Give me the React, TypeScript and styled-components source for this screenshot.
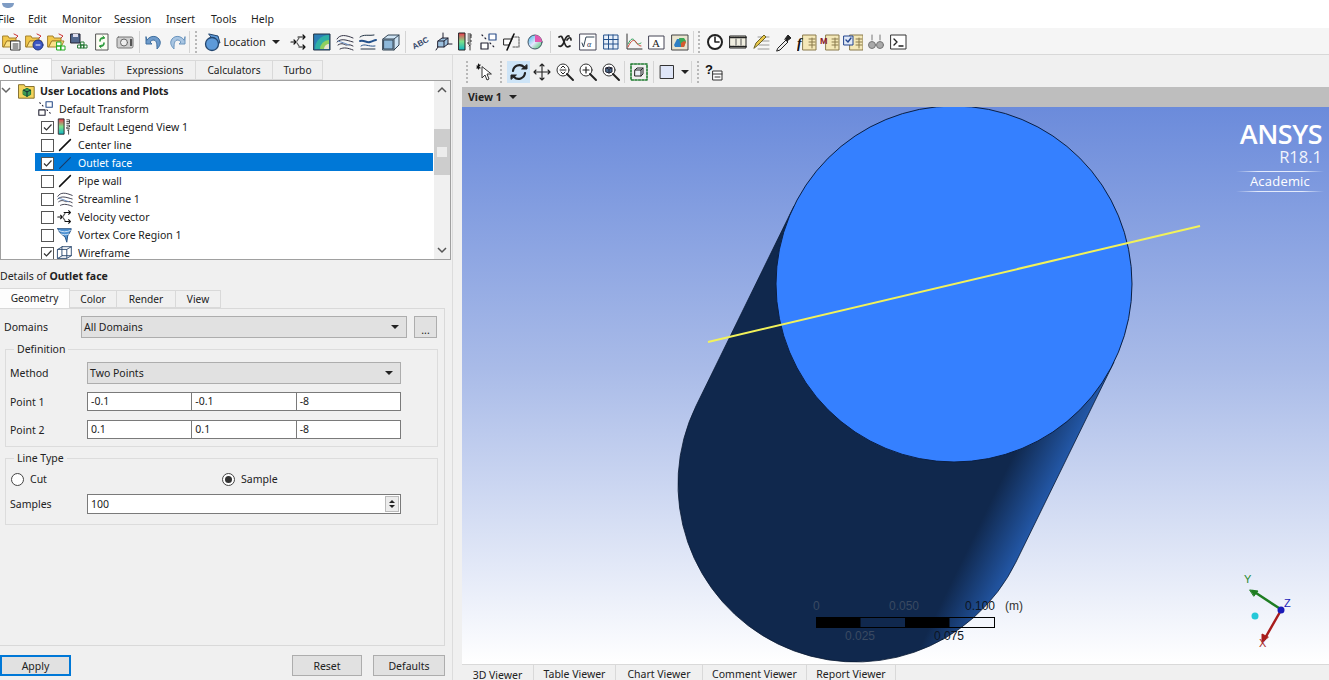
import React from 'react';
import styled, { createGlobalStyle } from 'styled-components';

const GlobalStyle = createGlobalStyle`
  html, body {
    margin: 0;
    padding: 0;
    height: 100%;
    overflow: hidden;
    background: #f0f0f0;
  }
  #root {
    height: 100%;
  }
  * {
    box-sizing: border-box;
  }
`;

const Shell = styled.div`
  width: 1329px;
  height: 680px;
  display: flex;
  flex-direction: column;
  overflow: hidden;
  font-family: 'Noto Sans', 'Open Sans', sans-serif;
  font-size: 10.5px;
  color: #222;
  background: #f0f0f0;
`;

const TitleBar = styled.div`
  height: 8px;
  background: #fff;
  flex: none;
  overflow: hidden;
  display: flex;
  align-items: flex-end;
  padding-left: 2px;
`;

const TitleDot = styled.span`
  width: 12px;
  height: 5px;
  border-radius: 0 0 6px 6px;
  background: #7f9cc4;
`;

const MenuBar = styled.nav`
  height: 20px;
  flex: none;
  background: #fff;
  display: flex;
  align-items: center;
  padding-top: 2px;
`;

const MenuItem = styled.span<{ $w: number }>`
  width: ${(p) => p.$w}px;
  flex: none;
  &:first-child {
    margin-left: -2px;
    width: ${(p) => p.$w + 2}px;
  }
`;

const MainToolbar = styled.div`
  height: 27px;
  flex: none;
  display: flex;
  align-items: center;
  background: #f5f5f5;
  border-bottom: 1px solid #d8d8d8;
  padding: 2px 0 0 1px;
`;

const ToolButton = styled.span<{ $active?: boolean; $w?: number }>`
  width: ${(p) => p.$w ?? 23}px;
  height: 22px;
  flex: none;
  display: flex;
  align-items: center;
  justify-content: center;
  background: ${(p) => (p.$active ? '#cde4f7' : 'transparent')};
`;

const Separator = styled.span<{ $w?: number }>`
  width: ${(p) => p.$w ?? 6}px;
  height: 22px;
  flex: none;
  display: flex;
  justify-content: center;
  &::before {
    content: '';
    width: 1px;
    background: #d4d4d4;
  }
`;

const Handle = styled.span<{ $w: number }>`
  width: ${(p) => p.$w}px;
  height: 22px;
  flex: none;
  display: flex;
  justify-content: center;
  &::before {
    content: '';
    width: 2px;
    background: repeating-linear-gradient(#b8b8b8 0 2px, transparent 2px 4px);
  }
`;

const LocationButton = styled.span`
  width: 87.5px;
  height: 22px;
  flex: none;
  display: flex;
  align-items: center;
  gap: 1px;
  padding-left: 2.5px;
`;

const CaretDown = styled.span<{ $ml?: number }>`
  width: 0;
  height: 0;
  flex: none;
  margin-left: ${(p) => p.$ml ?? 4}px;
  border-left: 4px solid transparent;
  border-right: 4px solid transparent;
  border-top: 4px solid #222;
`;

const Workspace = styled.div`
  flex: 1;
  min-height: 0;
  display: flex;
`;

const LeftPanel = styled.section`
  width: 453px;
  flex: none;
  display: flex;
  flex-direction: column;
  border-right: 1px solid #dcdcdc;
  padding-top: 3px;
`;

const TabStrip = styled.div<{ $h: number }>`
  height: ${(p) => p.$h}px;
  flex: none;
  display: flex;
  align-items: flex-end;
`;

const Tab = styled.span<{ $w: number; $active?: boolean; $start?: boolean }>`
  width: ${(p) => p.$w}px;
  height: ${(p) => (p.$active ? '100%' : 'calc(100% - 2px)')};
  flex: none;
  display: flex;
  align-items: center;
  justify-content: ${(p) => (p.$start ? 'flex-start' : 'center')};
  padding-left: ${(p) => (p.$start ? 3 : 0)}px;
  padding-bottom: ${(p) => (p.$active ? 2 : 0)}px;
  font-size: 10.2px;
  background: ${(p) => (p.$active ? '#fdfdfd' : '#f0f0f0')};
  border: 1px solid #d9d9d9;
  border-left-width: 0;
  border-bottom-width: ${(p) => (p.$active ? 0 : 1)}px;
`;

const TreeBox = styled.div`
  width: 451px;
  height: 180px;
  flex: none;
  display: flex;
  background: #fff;
  border: 1px solid #a0a0a0;
  overflow: hidden;
`;

const TreeRows = styled.div`
  flex: 1;
  min-width: 0;
`;

const TreeRow = styled.div<{ $selected?: boolean; $indent: number }>`
  height: 18px;
  display: flex;
  align-items: center;
  margin: 0 1px 0 34px;
  padding: 2px 0 0 ${(p) => p.$indent}px;
  background: ${(p) => (p.$selected ? '#0078d7' : 'transparent')};
  color: ${(p) => (p.$selected ? '#fff' : '#222')};
`;

const RootRow = styled.div`
  height: 18px;
  display: flex;
  align-items: center;
  font-weight: 700;
  padding-top: 1px;
`;

const Chevron = styled.svg`
  flex: none;
  margin-right: 5px;
`;

const RowIcon = styled.span`
  width: 18px;
  height: 18px;
  flex: none;
  margin: 0 4px 0 2px;
  display: flex;
  align-items: center;
  justify-content: center;
`;

const CheckBox = styled.span`
  width: 13px;
  height: 13px;
  flex: none;
  background: #fff;
  border: 1px solid #555;
  display: flex;
  align-items: center;
  justify-content: center;
`;

const ScrollBar = styled.div`
  width: 16px;
  flex: none;
  display: flex;
  flex-direction: column;
  background: #f0f0f0;
`;

const ScrollArrow = styled.div`
  height: 17px;
  flex: none;
  display: flex;
  align-items: center;
  justify-content: center;
`;

const ArrowGlyph = styled.svg<{ $flip?: boolean }>`
  transform: ${(p) => (p.$flip ? 'scaleY(-1)' : 'none')};
`;

const ScrollTrack = styled.div`
  flex: 1;
  padding-top: 31px;
`;

const ScrollThumb = styled.div`
  height: 46px;
  background: #cdcdcd;
  display: flex;
  align-items: center;
  justify-content: center;
  &::before {
    content: '';
    width: 10px;
    height: 10px;
    background: #ececec;
  }
`;

const DetailsTitle = styled.div`
  height: 28px;
  flex: none;
  display: flex;
  align-items: flex-end;
  padding-bottom: 5px;
  gap: 3px;
  b {
    font-weight: 700;
  }
`;

const DetailsPane = styled.div`
  width: 445px;
  height: 338px;
  flex: none;
  background: #f0f0f0;
  border: 1px solid #d9d9d9;
  border-left-width: 0;
  padding: 7px 7px 0 4px;
  display: flex;
  flex-direction: column;
`;

const DomainRow = styled.div`
  height: 22px;
  flex: none;
  display: flex;
  align-items: center;
`;

const FieldLabel = styled.label<{ $w: number }>`
  width: ${(p) => p.$w}px;
  flex: none;
`;

const Combo = styled.div<{ $w: number }>`
  width: ${(p) => p.$w}px;
  height: 22px;
  flex: none;
  background: #e1e1e1;
  border: 1px solid #adadad;
  display: flex;
  align-items: center;
  justify-content: space-between;
  padding: 0 7px 1px 2px;
  &::after {
    content: '';
    border-left: 4px solid transparent;
    border-right: 4px solid transparent;
    border-top: 4px solid #222;
    margin-top: 1px;
  }
`;

const MoreButton = styled.div`
  width: 23px;
  height: 22px;
  margin-left: 7px;
  background: #e1e1e1;
  border: 1px solid #adadad;
  display: flex;
  align-items: flex-end;
  justify-content: center;
  line-height: 14px;
`;

const Group = styled.fieldset<{ $h: number; $mt: number }>`
  width: 433px;
  height: ${(p) => p.$h}px;
  flex: none;
  margin: ${(p) => p.$mt}px 0 0 1px;
  padding: 0 4px;
  border: 1px solid #dcdcdc;
  min-width: 0;
  legend {
    padding: 0 3px;
    margin-left: 4px;
    line-height: 13px;
  }
`;

const FormRow = styled.div<{ $h: number; $mt?: number }>`
  height: ${(p) => p.$h}px;
  margin-top: ${(p) => p.$mt ?? 0}px;
  display: flex;
  align-items: center;
`;

const InputGroup = styled.div`
  width: 314px;
  display: flex;
`;

const TextInput = styled.div`
  flex: 1;
  height: 19px;
  background: #fff;
  border: 1px solid #7a7a7a;
  margin-left: -1px;
  padding-left: 3px;
  line-height: 16px;
  &:first-child {
    margin-left: 0;
  }
`;

const SpinInput = styled.div`
  width: 314px;
  height: 20px;
  background: #fff;
  border: 1px solid #7a7a7a;
  display: flex;
  align-items: center;
  justify-content: space-between;
  padding: 0 1px 0 3px;
`;

const SpinArrows = styled.span`
  width: 14px;
  height: 16px;
  background: #ececec;
  border: 1px solid #bbb;
  display: flex;
  flex-direction: column;
  align-items: center;
  justify-content: space-evenly;
`;

const SpinArrow = styled.i<{ $up?: boolean }>`
  border-left: 3px solid transparent;
  border-right: 3px solid transparent;
  ${(p) => (p.$up ? 'border-bottom: 3px solid #222;' : 'border-top: 3px solid #222;')}
`;

const RadioWrap = styled.span<{ $w: number }>`
  width: ${(p) => p.$w}px;
  flex: none;
  display: flex;
  align-items: center;
  gap: 6px;
  &:first-child {
    padding-left: 1px;
  }
`;

const Radio = styled.span<{ $on?: boolean }>`
  width: 13px;
  height: 13px;
  border: 1px solid #444;
  border-radius: 50%;
  background: #fff;
  display: flex;
  align-items: center;
  justify-content: center;
  &::before {
    content: '';
    width: 7px;
    height: 7px;
    border-radius: 50%;
    background: ${(p) => (p.$on ? '#333' : 'transparent')};
  }
`;

const ButtonBar = styled.div`
  width: 445px;
  flex: none;
  margin-top: 9px;
  display: flex;
  gap: 11px;
`;

const PushButton = styled.button<{ $w: number; $default?: boolean }>`
  width: ${(p) => p.$w}px;
  height: 21px;
  padding: 0;
  font: inherit;
  color: inherit;
  background: #e1e1e1;
  border: ${(p) => (p.$default ? '2px solid #0078d7' : '1px solid #adadad')};
  margin-right: ${(p) => (p.$default ? 210 : 0)}px;
`;

const RightPanel = styled.section`
  flex: 1;
  min-width: 0;
  margin-left: 9px;
  display: flex;
  flex-direction: column;
`;

const ViewToolbar = styled.div`
  height: 32px;
  flex: none;
  display: flex;
  align-items: center;
  padding-top: 2px;
`;

const ViewHeader = styled.div`
  height: 20px;
  flex: none;
  background: #bebebe;
  display: flex;
  align-items: center;
  padding-left: 6px;
  font-weight: 700;
  gap: 3px;
`;

const Canvas = styled.div`
  flex: 1;
  min-height: 0;
  position: relative;
  background: linear-gradient(#6b8bdb, #a9bbe8 47%, #ffffff 100%);
  overflow: hidden;
`;

const Scene = styled.svg`
  position: absolute;
  left: 0;
  top: 0;
`;

const Logo = styled.div`
  position: absolute;
  right: 7px;
  top: 13px;
  width: 90px;
  color: #fff;
  font-family: 'Open Sans', 'Noto Sans', sans-serif;
  text-align: right;
`;

const LogoName = styled.div`
  font-size: 27px;
  font-weight: 600;
  line-height: 27px;
  letter-spacing: -0.5px;
`;

const LogoRelease = styled.div`
  font-size: 16.5px;
  line-height: 20px;
  opacity: 0.9;
`;

const LogoEdition = styled.div`
  margin: 4px -2px 0 4px;
  height: 21px;
  font-size: 13px;
  line-height: 20px;
  text-align: center;
  letter-spacing: 0.2px;
  background:
    linear-gradient(90deg, transparent, #e4ebfb 25%, #e4ebfb 75%, transparent) top / 100% 1px no-repeat,
    linear-gradient(90deg, transparent, #e4ebfb 25%, #e4ebfb 75%, transparent) bottom / 100% 1px no-repeat;
`;

const BottomTabs = styled.div`
  height: 16px;
  flex: none;
  display: flex;
  background: #f0f0f0;
  border-top: 1px solid #d9d9d9;
`;

const BottomTab = styled.span<{ $w: number; $active?: boolean }>`
  width: ${(p) => p.$w}px;
  flex: none;
  display: flex;
  align-items: center;
  justify-content: center;
  padding-top: ${(p) => (p.$active ? 4 : 3)}px;
  line-height: 12px;
  border-right: 1px solid #d9d9d9;
  white-space: nowrap;
`;

const Svg = ({ size = 20, children }: { size?: number; children: React.ReactNode }) => (
  <svg width={size} height={size} viewBox="0 0 20 20" fill="none" strokeLinecap="round" strokeLinejoin="round">
    {children}
  </svg>
);

const folder = (
  <>
    <path d="M1 4h5l1 2h7v3H5L2 15H1z" fill="#f2c84b" stroke="#a5812a" />
    <path d="M5 9h12l-3 6H2z" fill="#fae28a" stroke="#a5812a" />
  </>
);

const glass = (inner: React.ReactNode) => (
  <>
    <circle cx="8" cy="8" r="6" fill="#fff" stroke="#333" />
    {inner}
    <path d="M12 12l6 6" stroke="#222" strokeWidth="2" />
  </>
);

const sheet = (x: number) => (
  <>
    <rect x={x} y="3" width="13" height="15" fill="#f4e8b8" stroke="#8a7b4c" />
    <path d={`M${x + 6} 7h6M${x + 6} 10h6M${x + 6} 13h6M${x + 9} 6v10`} stroke="#8a7b4c" />
  </>
);

const icons: Record<string, React.ReactNode> = {
  loadCase: (
    <>
      {folder}
      <rect x="9" y="9" width="9" height="9" fill="#fff" stroke="#333" />
      <path d="M11 12h5M11 14h5M11 16h5" stroke="#333" />
      <path d="M12 2l4 2-2 2" stroke="#c33" />
    </>
  ),
  loadDb: (
    <>
      {folder}
      <circle cx="13" cy="13" r="5" fill="#3d57c4" stroke="#20357f" />
      <path d="M11 13h4" stroke="#fff" />
      <path d="M12 2l4 2-2 2" stroke="#c33" />
    </>
  ),
  loadGrid: (
    <>
      {folder}
      <path d="M10 10h4v4h-4zM14 14h4v4h-4zM10 14h4v4h-4z" fill="#fff" stroke="#2a2" />
      <path d="M12 2l4 2-2 2" stroke="#c33" />
    </>
  ),
  saveGrid: (
    <>
      <rect x="1" y="2" width="9" height="9" fill="#52688f" stroke="#223" />
      <rect x="3" y="2" width="5" height="3" fill="#dde" />
      <path d="M11 10h3v3h-3zM14 13h3v3h-3zM11 13h3v3h-3zM8 13h3v3H8z" fill="#fff" stroke="#273" />
    </>
  ),
  refresh: (
    <>
      <rect x="4" y="2" width="12" height="16" fill="#fdfdf4" stroke="#555" />
      <path d="M12 6a3 3 0 0 0-4 3M8 14a3 3 0 0 0 4-3" stroke="#2a9a3a" strokeWidth="1.6" />
      <path d="M11 4l1.500 2L10 7M9 16l-1.500-2L10 13" stroke="#2a9a3a" />
    </>
  ),
  camera: (
    <>
      <rect x="2" y="5" width="16" height="11" rx="1.5" fill="#cfcfcf" stroke="#777" />
      <circle cx="9" cy="10.5" r="3.5" fill="#eee" stroke="#666" />
      <rect x="15" y="7" width="2" height="7" fill="#555" />
    </>
  ),
  undo: <path d="M3 8c3-5 11-5 13 1 1 3-1 6-3 8 0-4 0-8-3-9-2 0-3 1-4 2l2 2H2V5z" fill="#6e9bcb" stroke="#3f6f9f" />,
  redo: <path d="M17 8c-3-5-11-5-13 1-1 3 1 6 3 8 0-4 0-8 3-9 2 0 3 1 4 2l-2 2h6V5z" fill="#a8c5e2" stroke="#6a94bd" />,
  location: (
    <>
      <path d="M6 2l9 2 2 7-5-1z" fill="#5d9ad9" stroke="#23466f" />
      <circle cx="9" cy="12" r="6.5" fill="#5d9ad9" stroke="#23466f" strokeWidth="1.3" />
    </>
  ),
  arrows: (
    <g stroke="#111" strokeWidth="1.2">
      <path d="M2 10h5M5 8l2 2-2 2" />
      <path d="M9 5h7M14 3l2 2-2 2" />
      <path d="M10 15h6M14 13l2 2-2 2" />
      <path d="M8 9l2-3M8 11l2 3" stroke="#555" />
    </g>
  ),
  contour: (
    <>
      <rect x="2" y="2" width="16" height="16" fill="#2c7fb5" stroke="#234" />
      <path d="M3 17a14 14 0 0 1 14-14v14z" fill="#2fb0a5" />
      <path d="M8 17a9 9 0 0 1 9-9v9z" fill="#8fcf5f" />
      <path d="M12 17a5 5 0 0 1 5-5v5z" fill="#e8e4d0" />
    </>
  ),
  stream: (
    <g stroke="#334" strokeWidth="1">
      <path d="M2 7c3-5 9-4 16-1" />
      <path d="M2 10c4-4 9-2 16 0" />
      <path d="M3 13c4-3 7 0 8 0s4-1 7 1" />
      <path d="M5 17c4-2 8-1 13 1" />
      <path d="M3 9c3 1 9 3 11 4" stroke="#6a8fc4" />
    </g>
  ),
  isoclip: (
    <g stroke="#234">
      <path d="M2 5c4-3 8-1 14-2" />
      <path d="M2 9c5-1 6 2 10 1s4-2 6-2" stroke="#24518b" strokeWidth="2" />
      <path d="M3 14c4-3 7 1 14 0" stroke="#24518b" />
      <path d="M3 17h14" />
    </g>
  ),
  volume: (
    <g stroke="#345">
      <path d="M2 7l5-4h11v10l-5 5H2z" fill="#cfe4f4" />
      <path d="M2 7h11v11" />
      <path d="M13 7l5-4" />
      <path d="M3 8h9v9H3z" fill="#8eb8d9" />
    </g>
  ),
  text: (
    <text x="2" y="15" fontSize="8" fontWeight="700" fill="#33476b" transform="rotate(-28 8 12)" fontFamily="Liberation Sans, sans-serif">ABC</text>
  ),
  coord: (
    <g stroke="#223">
      <path d="M5 9l4-3h6v6l-4 3H5z" fill="#9cc0de" />
      <path d="M5 9h6v6M11 9l4-3" />
      <path d="M10 6V1M3 18l2-3M15 12h4" />
    </g>
  ),
  legend: (
    <>
      <defs>
        <linearGradient id="legendBar" x1="0" y1="0" x2="0" y2="1">
          <stop offset="0" stopColor="#f0394d" />
          <stop offset="0.5" stopColor="#7be08a" />
          <stop offset="1" stopColor="#12b5c4" />
        </linearGradient>
      </defs>
      <rect x="3" y="1" width="6" height="17" fill="url(#legendBar)" stroke="#222" />
      <path d="M12 2h3v2h-3M15 4v2h-3M12 8h3v2h-3v2h3M13 14l1-1v5" stroke="#222" strokeWidth="0.9" />
    </>
  ),
  transform: (
    <g stroke="#223" strokeWidth="1.2">
      <rect x="10" y="2" width="7" height="6" fill="#fff" stroke="#2c4f8a" />
      <rect x="2" y="11" width="7" height="6" fill="#fff" />
      <path d="M3 3l1 1M6 6l1 1M11 11l1 1M14 14l1 1" strokeDasharray="1 1" />
    </g>
  ),
  clip: (
    <g>
      <path d="M10 5h7v10h-7" stroke="#555" strokeDasharray="2 1" />
      <path d="M2 7h8l-3 6H2z" fill="#fff" stroke="#222" />
      <path d="M12 2L5 18" stroke="#111" strokeWidth="1.6" />
    </g>
  ),
  color: (
    <>
      <defs>
        <linearGradient id="wheelA" x1="0" y1="0" x2="1" y2="1">
          <stop offset="0" stopColor="#2fb8e6" />
          <stop offset="0.5" stopColor="#e6e6ff" />
          <stop offset="1" stopColor="#37c45a" />
        </linearGradient>
      </defs>
      <circle cx="10" cy="10" r="7" fill="url(#wheelA)" stroke="#456" />
      <path d="M10 3a7 7 0 0 1 7 7l-7 0z" fill="#e25ab0" />
    </>
  ),
  variable: <path d="M4 5c3-2 3 0 5 5s3 6 6 4M14 4c-2-1-4 3-5 6s-3 5-5 4M12 8c2-3 4-3 4 0" stroke="#222" strokeWidth="1.7" />,
  expression: (
    <>
      <rect x="2" y="2" width="16" height="16" fill="#fff" stroke="#445" />
      <path d="M4 11l1.500 4L8 5h8" stroke="#345" />
      <text x="9" y="15" fontSize="8" fontStyle="italic" fill="#235" fontFamily="Liberation Serif, serif">α</text>
    </>
  ),
  table: (
    <>
      <rect x="3" y="3" width="14" height="14" fill="#e8f0fa" stroke="#24518b" />
      <path d="M3 7.500h14M3 12h14M7.500 3v14M12 3v14" stroke="#24518b" />
    </>
  ),
  chart: (
    <>
      <path d="M3 2v15h15" stroke="#333" />
      <path d="M4 12c3-6 5-6 7-3s3 4 6 2" stroke="#2ca05a" />
      <path d="M4 15c3-7 6-8 8-5s3 4 5 4" stroke="#cc4b3c" />
    </>
  ),
  comment: (
    <>
      <rect x="2" y="4" width="15" height="13" fill="#fff" stroke="#445" />
      <text x="5" y="15" fontSize="11" fontFamily="Liberation Serif, serif" fill="#222">A</text>
    </>
  ),
  figure: (
    <>
      <rect x="2" y="3" width="16" height="15" fill="#e9e4cf" stroke="#444" />
      <path d="M4 13l3-6h5l-1 8H5z" fill="#2e7fc4" />
      <path d="M9 6h5l2 3-2 6h-3z" fill="#3aa856" />
      <path d="M11 11l3-2 2 1-2 5h-3z" fill="#d55b2d" />
    </>
  ),
  clock: (
    <>
      <circle cx="10" cy="10" r="7" fill="#fff" stroke="#222" strokeWidth="2" />
      <path d="M10 5v5h4" stroke="#222" strokeWidth="1.6" />
    </>
  ),
  film: (
    <>
      <rect x="2" y="4" width="16" height="12" fill="#f0eee0" stroke="#222" />
      <path d="M2 5.500h16M2 14.500h16" stroke="#222" strokeWidth="1.600" strokeDasharray="1.500 1" />
      <path d="M8 7v6M13 7v6" stroke="#555" />
    </>
  ),
  notes: (
    <>
      <path d="M7 5h11M9 9h9M8 13h10M7 17h11" stroke="#999" />
      <path d="M3 16l2-5 8-8 2 2-8 8z" fill="#e8c64a" stroke="#6c6223" />
    </>
  ),
  probe: (
    <>
      <path d="M4 16l8-8 2 2-8 8-3 1z" fill="#eee" stroke="#222" />
      <path d="M11 7l3-4 3 3-4 3z" fill="#222" stroke="#222" />
    </>
  ),
  func: (
    <>
      {sheet(6)}
      <text x="0" y="16" fontSize="14" fontStyle="italic" fontWeight="700" fill="#111" fontFamily="Liberation Serif, serif">f</text>
    </>
  ),
  macro: (
    <>
      {sheet(6)}
      <text x="0" y="12" fontSize="9" fontWeight="700" fill="#8c1822" fontFamily="Liberation Sans, sans-serif">M</text>
    </>
  ),
  checkSheet: (
    <>
      {sheet(7)}
      <rect x="1" y="4" width="9" height="9" fill="#dfe8f7" stroke="#23458f" />
      <path d="M3 8l2 2 3-4" stroke="#23458f" strokeWidth="1.4" />
    </>
  ),
  compare: (
    <g stroke="#777" fill="#aaa">
      <circle cx="6" cy="13" r="3.5" />
      <circle cx="14" cy="13" r="3.5" />
      <path d="M6 3v5M14 3v5" fill="none" />
    </g>
  ),
  terminal: (
    <>
      <rect x="2" y="3" width="15" height="14" fill="#fff" stroke="#333" />
      <path d="M5 7l3 3-3 3M10 14h4" stroke="#222" strokeWidth="1.4" />
    </>
  ),
  pointer: (
    <>
      <path d="M8 5v11l3-3 2 5 2-1-2-5h4z" fill="#fff" stroke="#333" />
      <path d="M3 4l3 2M6 3L3 6M4.500 2v5" stroke="#111" strokeWidth="1.2" />
    </>
  ),
  rotate: (
    <>
      <path d="M4 9a6.500 6.500 0 0 1 11-4" stroke="#222" strokeWidth="2.2" />
      <path d="M16 11a6.500 6.500 0 0 1-11 4" stroke="#222" strokeWidth="2.2" />
      <path d="M13 7h5V3zM7 13H2v4z" fill="#222" stroke="#222" />
    </>
  ),
  pan: <path d="M10 2v16M2 10h16M8 4l2-2 2 2M8 16l2 2 2-2M4 8l-2 2 2 2M16 8l2 2-2 2" stroke="#222" strokeWidth="1.1" />,
  zoomDolly: glass(<path d="M6 6l2-2 2 2M6 10l2 2 2-2M5 8h6" stroke="#222" />),
  zoomBox: glass(<path d="M8 5v6M5 8h6" stroke="#222" strokeWidth="1.2" />),
  zoomFit: glass(<path d="M5 6l3-1 3 1v4l-3 1-3-1zM5 6l3 1 3-1M8 7v4" fill="#4f6f8f" stroke="#223" />),
  fit: (
    <>
      <rect x="2" y="2" width="16" height="16" stroke="#1d7a2e" strokeWidth="1.6" strokeDasharray="2 1.500" />
      <path d="M6 8l2-2h6v6l-2 2H6z" fill="#e9eef5" stroke="#222" />
      <path d="M6 8h6v6M12 8l2-2" stroke="#222" />
    </>
  ),
  help: (
    <>
      <text x="1" y="12" fontSize="13" fontWeight="700" fill="#111" fontFamily="Liberation Sans, sans-serif">?</text>
      <rect x="9" y="9" width="9" height="9" fill="#fff" stroke="#333" />
      <path d="M9 12h9M11 15h5" stroke="#333" />
    </>
  ),
  swatch: <rect x="2.500" y="3.500" width="13" height="13" fill="#dfe6f8" stroke="#333" />,
  line: <path d="M4 16L16 4" stroke="#111" strokeWidth="1.7" />,
  lineSelected: <path d="M4 16L16 4" stroke="#173a66" strokeWidth="1.2" />,
  vortex: (
    <>
      <path d="M2 3h15c-1 4-3 6-4 8l-1 7-2-6C7 10 3 7 2 3z" fill="#4d92d3" stroke="#1d4a7c" />
      <path d="M3 5c4 2 9 2 13 0M6 9c2 1 5 1 8 0" stroke="#dcebfa" />
    </>
  ),
  wire: (
    <g stroke="#25446b" strokeWidth="1">
      <rect x="2" y="6" width="10" height="10" />
      <rect x="7" y="3" width="10" height="10" />
      <path d="M2 6l5-3M12 6l5-3M2 16l5-3M12 16l5-3" />
    </g>
  ),
  root: (
    <>
      <path d="M1 3h6l1 2h10v13H1z" fill="#f4d45c" stroke="#7c6520" />
      <path d="M6 9l4-2 4 2v5l-4 2-4-2z" fill="#3c9a55" stroke="#173" />
      <path d="M6 9l4 2 4-2M10 11v5" stroke="#123" />
    </>
  ),
};

const Icon = ({ name }: { name: string }) => <Svg>{icons[name]}</Svg>;

const Tool = ({ name, active, w }: { name: string; active?: boolean; w?: number }) => (
  <ToolButton $active={active} $w={w}>
    <Icon name={name} />
  </ToolButton>
);

const Check = () => (
  <svg width="11" height="11" viewBox="0 0 11 11" fill="none">
    <path d="M2 5.500l2.500 2.500L9.500 2.500" stroke="#333" strokeWidth="1.200" />
  </svg>
);

const ScrollChevron = ({ flip }: { flip?: boolean }) => (
  <ArrowGlyph $flip={flip} width="10" height="7" viewBox="0 0 10 7" fill="none">
    <path d="M1 6l4-4 4 4" stroke="#555" strokeWidth="1.500" />
  </ArrowGlyph>
);

const treeItems: { label: string; icon: string; check?: boolean; selected?: boolean; box: boolean }[] = [
  { label: 'Default Transform', icon: 'transform', box: false },
  { label: 'Default Legend View 1', icon: 'legend', check: true, box: true },
  { label: 'Center line', icon: 'line', box: true },
  { label: 'Outlet face', icon: 'lineSelected', check: true, selected: true, box: true },
  { label: 'Pipe wall', icon: 'line', box: true },
  { label: 'Streamline 1', icon: 'stream', box: true },
  { label: 'Velocity vector', icon: 'arrows', box: true },
  { label: 'Vortex Core Region 1', icon: 'vortex', box: true },
  { label: 'Wireframe', icon: 'wire', check: true, box: true },
];

const menus: [string, number][] = [
  ['File', 28],
  ['Edit', 34],
  ['Monitor', 52],
  ['Session', 52],
  ['Insert', 45],
  ['Tools', 40],
  ['Help', 40],
];

const ViewScene = () => (
  // viewBox uses page coordinates: the viewport starts at x 462, y 107
  <Scene width={867} height={557} viewBox="462 107 867 557">
    <defs>
      <linearGradient id="barrel" gradientUnits="userSpaceOnUse" x1="794" y1="206" x2="1114" y2="362">
        <stop offset="0" stopColor="#10284d" />
        <stop offset="0.86" stopColor="#10284d" />
        <stop offset="1" stopColor="#2358a8" />
      </linearGradient>
    </defs>
    <path d="M794 206L696 406A178 178 0 0 0 1016 562L1114 362Z" fill="url(#barrel)" stroke="#0a1a33" strokeWidth="0.8" />
    <circle cx="954" cy="284" r="178" fill="#3580ff" stroke="#0a1f44" strokeWidth="1" />
    <path d="M708 342L1200 226" stroke="#f2f25a" strokeWidth="2" />
    <g fontFamily="Liberation Sans, sans-serif" fontSize="12" fill="#3a4a62">
      <text x="813" y="610">0</text>
      <text x="889" y="610">0.050</text>
      <text x="965" y="610" fill="#0d1522">0.100</text>
      <text x="1005" y="610" fill="#333">(m)</text>
      <text x="845" y="640">0.025</text>
      <text x="934" y="640" fill="#0d1522">0.075</text>
    </g>
    <rect x="816.500" y="617.500" width="178" height="10" fill="none" stroke="#000" />
    <rect x="816" y="617" width="44.500" height="10.500" fill="#000" />
    <rect x="905" y="617" width="44.500" height="10.500" fill="#000" />
    <g strokeLinecap="round">
      <path d="M1282 610L1253 591" stroke="#1e7d22" strokeWidth="2.500" />
      <path d="M1250 590l8 1-4 5z" fill="#1e7d22" stroke="#1e7d22" />
      <path d="M1280 612L1264 640" stroke="#a81c1c" strokeWidth="2.500" />
      <path d="M1262 642l0-8 6 3z" fill="#a81c1c" stroke="#a81c1c" />
      <circle cx="1281" cy="610" r="3.500" fill="#1a1ab8" />
      <circle cx="1255" cy="616" r="3.500" fill="#25c8d8" />
      <g fontFamily="Liberation Sans, sans-serif" fontSize="11">
        <text x="1244" y="583" fill="#2a8a2e">Y</text>
        <text x="1284" y="607" fill="#1a1ab8">Z</text>
        <text x="1259" y="647" fill="#a82a2a">X</text>
      </g>
    </g>
  </Scene>
);

export default function App() {
  return (
    <>
      <GlobalStyle />
      <Shell>
        <TitleBar>
          <TitleDot />
        </TitleBar>
        <MenuBar>
          {menus.map(([m, w]) => (
            <MenuItem key={m} $w={w}>
              {m}
            </MenuItem>
          ))}
        </MenuBar>
        <MainToolbar>
          {['loadCase', 'loadDb', 'loadGrid', 'saveGrid', 'refresh', 'camera'].map((n) => (
            <Tool key={n} name={n} w={22.5} />
          ))}
          <Separator $w={7} />
          <Tool name="undo" w={22.5} />
          <Tool name="redo" w={22.5} />
          <Separator $w={3} />
          <Handle $w={9} />
          <LocationButton>
            <Icon name="location" />
            Location
            <CaretDown $ml={5} />
          </LocationButton>
          {['arrows', 'contour', 'stream', 'isoclip', 'volume'].map((n) => (
            <Tool key={n} name={n} />
          ))}
          <Separator />
          {['text', 'coord', 'legend', 'transform', 'clip', 'color'].map((n) => (
            <Tool key={n} name={n} />
          ))}
          <Separator $w={7} />
          {['variable', 'expression', 'table', 'chart', 'comment', 'figure'].map((n) => (
            <Tool key={n} name={n} />
          ))}
          <Separator $w={3} />
          <Handle $w={9} />
          {['clock', 'film', 'notes', 'probe', 'func', 'macro', 'checkSheet', 'compare', 'terminal'].map((n) => (
            <Tool key={n} name={n} />
          ))}
        </MainToolbar>
        <Workspace>
          <LeftPanel>
            <TabStrip $h={22}>
              <Tab $w={52} $active $start>Outline</Tab>
              <Tab $w={63}>Variables</Tab>
              <Tab $w={81}>Expressions</Tab>
              <Tab $w={77}>Calculators</Tab>
              <Tab $w={50}>Turbo</Tab>
            </TabStrip>
            <TreeBox>
              <TreeRows>
                <RootRow>
                  <Chevron width="10" height="7" viewBox="0 0 10 7" fill="none">
                    <path d="M1 1l4 4 4-4" stroke="#666" strokeWidth="1.500" />
                  </Chevron>
                  <RowIcon>
                    <Icon name="root" />
                  </RowIcon>
                  User Locations and Plots
                </RootRow>
                {treeItems.map((it) => (
                  <TreeRow key={it.label} $selected={it.selected} $indent={it.box ? 6 : 0}>
                    {it.box && <CheckBox>{it.check && <Check />}</CheckBox>}
                    <RowIcon>
                      <Icon name={it.icon} />
                    </RowIcon>
                    {it.label}
                  </TreeRow>
                ))}
              </TreeRows>
              <ScrollBar>
                <ScrollArrow>
                  <ScrollChevron />
                </ScrollArrow>
                <ScrollTrack>
                  <ScrollThumb />
                </ScrollTrack>
                <ScrollArrow>
                  <ScrollChevron flip />
                </ScrollArrow>
              </ScrollBar>
            </TreeBox>
            <DetailsTitle>
              Details of <b>Outlet face</b>
            </DetailsTitle>
            <TabStrip $h={20}>
              <Tab $w={70} $active>Geometry</Tab>
              <Tab $w={47}>Color</Tab>
              <Tab $w={59}>Render</Tab>
              <Tab $w={45}>View</Tab>
            </TabStrip>
            <DetailsPane>
              <DomainRow>
                <FieldLabel $w={77}>Domains</FieldLabel>
                <Combo $w={326}>All Domains</Combo>
                <MoreButton>...</MoreButton>
              </DomainRow>
              <Group $h={104} $mt={5}>
                <legend>Definition</legend>
                <FormRow $h={22} $mt={6}>
                  <FieldLabel $w={77}>Method</FieldLabel>
                  <Combo $w={314}>Two Points</Combo>
                </FormRow>
                <FormRow $h={19} $mt={8}>
                  <FieldLabel $w={77}>Point 1</FieldLabel>
                  <InputGroup>
                    <TextInput>-0.1</TextInput>
                    <TextInput>-0.1</TextInput>
                    <TextInput>-8</TextInput>
                  </InputGroup>
                </FormRow>
                <FormRow $h={19} $mt={9}>
                  <FieldLabel $w={77}>Point 2</FieldLabel>
                  <InputGroup>
                    <TextInput>0.1</TextInput>
                    <TextInput>0.1</TextInput>
                    <TextInput>-8</TextInput>
                  </InputGroup>
                </FormRow>
              </Group>
              <Group $h={73} $mt={5}>
                <legend>Line Type</legend>
                <FormRow $h={20} $mt={4}>
                  <RadioWrap $w={212}>
                    <Radio />
                    Cut
                  </RadioWrap>
                  <RadioWrap $w={80}>
                    <Radio $on />
                    Sample
                  </RadioWrap>
                </FormRow>
                <FormRow $h={20} $mt={5}>
                  <FieldLabel $w={77}>Samples</FieldLabel>
                  <SpinInput>
                    100
                    <SpinArrows>
                      <SpinArrow $up />
                      <SpinArrow />
                    </SpinArrows>
                  </SpinInput>
                </FormRow>
              </Group>
            </DetailsPane>
            <ButtonBar>
              <PushButton $w={71} $default>Apply</PushButton>
              <PushButton $w={70}>Reset</PushButton>
              <PushButton $w={72}>Defaults</PushButton>
            </ButtonBar>
          </LeftPanel>
          <RightPanel>
            <ViewToolbar>
              <Handle $w={10} />
              <Tool name="pointer" />
              <Handle $w={12} />
              <Tool name="rotate" active />
              <Tool name="pan" />
              <Tool name="zoomDolly" />
              <Tool name="zoomBox" />
              <Tool name="zoomFit" />
              <Separator $w={5} />
              <Tool name="fit" />
              <Separator />
              <Tool name="swatch" />
              <CaretDown $ml={2} />
              <Separator $w={5} />
              <Handle $w={8} />
              <Tool name="help" />
            </ViewToolbar>
            <ViewHeader>
              View 1
              <CaretDown />
            </ViewHeader>
            <Canvas>
              <ViewScene />
              <Logo>
                <LogoName>ANSYS</LogoName>
                <LogoRelease>R18.1</LogoRelease>
                <LogoEdition>Academic</LogoEdition>
              </Logo>
            </Canvas>
            <BottomTabs>
              <BottomTab $w={72} $active>3D Viewer</BottomTab>
              <BottomTab $w={82}>Table Viewer</BottomTab>
              <BottomTab $w={87}>Chart Viewer</BottomTab>
              <BottomTab $w={104}>Comment Viewer</BottomTab>
              <BottomTab $w={89}>Report Viewer</BottomTab>
            </BottomTabs>
          </RightPanel>
        </Workspace>
      </Shell>
    </>
  );
}
